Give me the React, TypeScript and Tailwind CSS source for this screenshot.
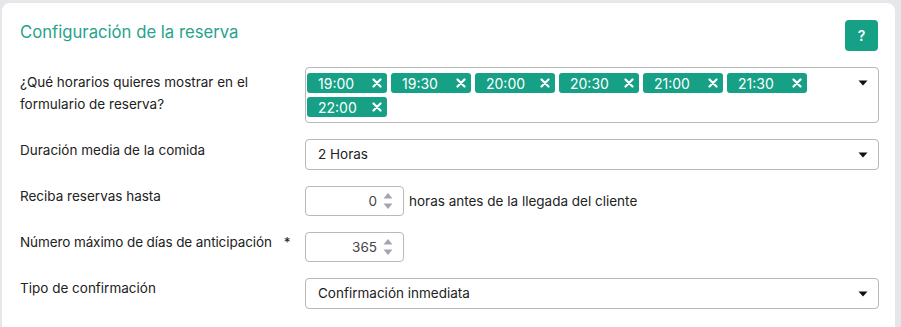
const times = ["19:00", "19:30", "20:00", "20:30", "21:00", "21:30", "22:00"];

function Caret() {
  return (
    <svg width="10" height="6" viewBox="0 0 10 6" className="shrink-0">
      <path d="M0.5 0.5 L9.5 0.5 L5 5.5 Z" fill="#111" />
    </svg>
  );
}

function Spinner() {
  return (
    <svg width="10" height="22" viewBox="0 0 10 22" className="shrink-0">
      <path d="M0.5 8.5 L9.5 8.5 L5 3 Z" fill="#a3a7ad" />
      <path d="M0.5 13.5 L9.5 13.5 L5 19 Z" fill="#a3a7ad" />
    </svg>
  );
}

function NumberInput({ value }: { value: string }) {
  return (
    <div className="w-[99px] h-[30px] border border-[#b9b9b9] rounded-[4px] flex items-center justify-end pr-[10px] gap-[6px] bg-white">
      <span className="text-[13.5px] text-[#444]">{value}</span>
      <Spinner />
    </div>
  );
}

function Select({ value }: { value: string }) {
  return (
    <div className="h-[31px] border border-[#b9b9b9] rounded-[4px] flex items-center justify-between pl-[12px] pr-[10px] bg-white">
      <span className="text-[13.5px] text-[#222]">{value}</span>
      <Caret />
    </div>
  );
}

export default function App() {
  return (
    <div
      className="min-h-screen bg-[#e5e7eb] pt-[3px] pl-[2px] pr-[6px]"
      style={{ fontFamily: "Inter, 'Noto Sans', sans-serif" }}
    >
      <div className="bg-white rounded-t-[8px] min-h-[330px] pl-[18px] pr-[16px] pt-[17px] pb-6">
        {/* Header */}
        <div className="flex items-start justify-between">
          <h2 className="text-[16.7px] leading-[24px] text-[#26a38b]">
            Configuración de la reserva
          </h2>
          <button className="w-[33px] h-[31px] rounded-[4px] bg-[#16a085] text-white text-[14px] font-semibold flex items-center justify-center mr-[1px]">
            ?
          </button>
        </div>

        <div className="grid grid-cols-[285px_1fr] gap-y-[16px] mt-[16px] text-[13.5px] text-[#222]">
          <div className="leading-[22px] pt-[4px]">
            ¿Qué horarios quieres mostrar en el
            <br />
            formulario de reserva?
          </div>
          <div className="border border-[#b9b9b9] rounded-[4px] flex items-start pl-[1px] pr-[10px] py-[5px] bg-white">
            <div className="flex flex-wrap gap-[4px] w-[500px]">
              {times.map((t) => (
                <span
                  key={t}
                  className="h-[20px] w-[80px] rounded-[3px] bg-[#16a085] text-white flex items-center justify-between pl-[11px] pr-[5px] text-[14px]"
                >
                  {t}
                  <svg width="10" height="10" viewBox="0 0 10 10">
                    <path d="M1.5 1.5 L8.5 8.5 M8.5 1.5 L1.5 8.5" stroke="#fff" strokeWidth="2.2" strokeLinecap="round" />
                  </svg>
                </span>
              ))}
            </div>
            <div className="ml-auto mt-[7px]">
              <Caret />
            </div>
          </div>

          <div className="leading-[22px]">Duración media de la comida</div>
          <Select value="2 Horas" />

          <div className="leading-[20px]">Reciba reservas hasta</div>
          <div className="flex items-center gap-[5px]">
            <NumberInput value="0" />
            <span className="text-[#222]">horas antes de la llegada del cliente</span>
          </div>

          <div className="leading-[20px] tracking-[-0.1px]">
            Número máximo de días de anticipación<span className="ml-[12px]">*</span>
          </div>
          <div>
            <NumberInput value="365" />
          </div>

          <div className="leading-[20px]">Tipo de confirmación</div>
          <Select value="Confirmación inmediata" />
        </div>
      </div>
    </div>
  );
}
